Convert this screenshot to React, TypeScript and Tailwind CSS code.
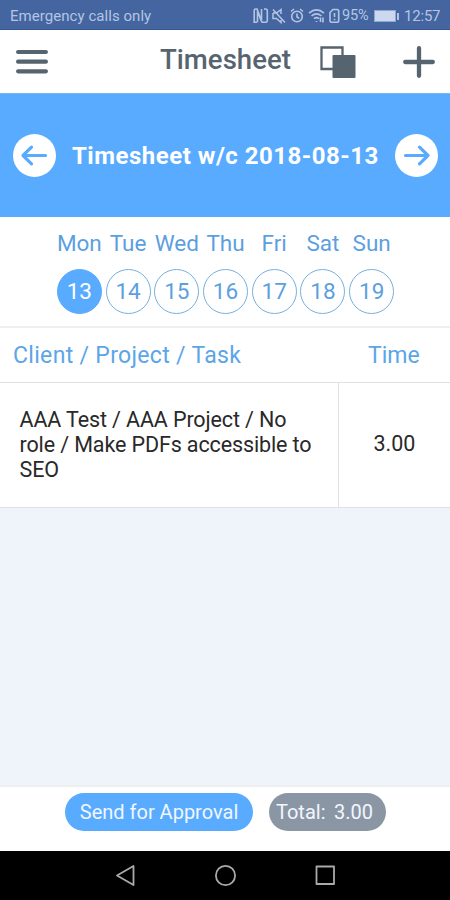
import type { ReactNode } from 'react';

const days = [
  { name: 'Mon', date: 13 },
  { name: 'Tue', date: 14 },
  { name: 'Wed', date: 15 },
  { name: 'Thu', date: 16 },
  { name: 'Fri', date: 17 },
  { name: 'Sat', date: 18 },
  { name: 'Sun', date: 19 },
];

function StatusBar() {
  return (
    <div className="flex h-[30px] shrink-0 items-center border-b border-[#35568f] bg-[#44659f] pt-[3px] pl-[10px] text-[15px] text-[#b3c5e4]">
      <span className="w-[243px] tracking-[0.05px]">Emergency calls only</span>
      <svg width="88" height="18" viewBox="253 7 88 18" fill="none" stroke="currentColor" strokeWidth="1.600" className="shrink-0">
        <path d="M257 22.300h-2.800V10.500q0-1.500 1.500-1.500h1.300l4.500 11.500V9M264 9h1.600q1.700 0 1.700 1.700v10q0 1.600-1.700 1.600h-2.400q-1.600 0-2-1.600L257.500 11v11.300" />
        <path d="M273 13h3.500l4.500-3.500v4.500M273 13v5.500h3.500l4.500 4V20M273 9.500l12 13" strokeWidth="1.500" />
        <circle cx="297" cy="16.500" r="5.300" />
        <path d="M297 13.500v3.500l2.200 1.300M291 11.500l3-2.500M303 11.500l-3-2.500" />
        <path d="M309 13.200q7.500-6.500 15 0M311.500 16q5-4.300 10 0M314 18.700q2.500-2.200 5 0M316.500 21v1M320.500 17.500v4.500M323 22.500v-5" />
        <path d="M330 12.500l3-3h4q1.700 0 1.700 1.700v9.300q0 1.700-1.700 1.700h-5.300q-1.700 0-1.700-1.700zM334.500 13v4M334.500 18.700v1.500" />
      </svg>
      <span className="ml-[1px] w-[30px] text-[14.500px] tracking-[-0.1px]">95%</span>
      <span className="ml-[2px] h-[12px] w-[22px] border border-[#91a8d0] bg-[#cbd8ef]" />
      <span className="ml-[1px] h-[7px] w-[2px] bg-[#b3c5e4]" />
      <span className="ml-[5px] tracking-[-0.2px]">12:57</span>
    </div>
  );
}

function RoundButton({ label, children }: { label: string; children: ReactNode }) {
  return (
    <button aria-label={label} className="flex size-[43px] shrink-0 items-center justify-center rounded-full bg-white text-[#58abff]">
      <svg width="43" height="43" viewBox="0 0 43 43" fill="none" stroke="currentColor" strokeWidth="3.200" strokeLinecap="round" strokeLinejoin="round">
        {children}
      </svg>
    </button>
  );
}

export default function App() {
  return (
    <div className="flex h-[900px] w-[450px] flex-col overflow-hidden bg-white font-[Roboto,sans-serif] whitespace-nowrap">
      <StatusBar />

      <header className="flex h-[63px] shrink-0 items-center pl-[16px] text-[#56646f]">
        <svg width="32" height="26" viewBox="0 0 32 26" stroke="currentColor" strokeWidth="4.200" strokeLinecap="round">
          <path d="M2.100 3h27.800M2.100 12.700h27.800M2.100 22.300h27.800" />
        </svg>
        <h1 className="ml-[112px] w-[160px] pb-[3px] text-[27.500px] font-medium tracking-[0.05px]">Timesheet</h1>
        <svg width="36" height="32" viewBox="320 46 36 32">
          <path d="M321.500 47.500h21v21.500h-21z" fill="#fff" stroke="currentColor" strokeWidth="2.300" />
          <rect x="332.500" y="55" width="23" height="23" rx="1" fill="currentColor" />
        </svg>
        <svg width="32" height="32" viewBox="0 0 32 32" stroke="currentColor" strokeWidth="4.300" strokeLinecap="round" className="ml-[47px]">
          <path d="M16 2.200v27.600M2.200 16h27.600" />
        </svg>
      </header>

      <section className="flex h-[124px] shrink-0 items-center border-t border-[#75b7f8] bg-[#58abff] px-[13px]">
        <RoundButton label="Previous week">
          <path d="M32.500 21.500H10M18.500 13.200L10 21.500L18.500 29.800" />
        </RoundButton>
        <h2 className="ml-[16px] w-[323px] shrink-0 text-[24px] font-bold tracking-[0.5px] text-white">Timesheet w/c 2018-08-13</h2>
        <RoundButton label="Next week">
          <path d="M10.500 21.500H33M24.500 13.200L33 21.500L24.500 29.800" />
        </RoundButton>
      </section>

      <section className="h-[111px] shrink-0 border-b-2 border-[#eeeff1] pt-[9px] pl-[55px] text-[22.500px] text-[#5c9fdf]">
        <div className="grid w-[341px] grid-cols-7">
          {days.map(({ name, date }) => (
            <div key={date} className="flex flex-col items-center">
              <span className="leading-[34px]">{name}</span>
              <span
                className={
                  'mt-[9px] flex size-[45px] items-center justify-center rounded-full border-[1.500px] ' +
                  (date === 13 ? 'border-[#58abff] bg-[#58abff] text-white' : 'border-[#76b0dc]')
                }
              >
                {date}
              </span>
            </div>
          ))}
        </div>
      </section>

      <div className="flex h-[55px] shrink-0 items-center border-b border-[#dfe1e4] pt-[2px] pl-[13px] text-[23px] text-[#5ba5e8]">
        <span className="w-[355px] tracking-[0.32px]">Client / Project / Task</span>
        <span>Time</span>
      </div>

      <div className="flex h-[125px] shrink-0 border-b border-[#dfe1e4] text-[21.500px] text-[#292929]">
        <p className="w-[339px] border-r-[1.500px] border-[#dfe1e4] pt-[24px] pl-[19.500px] leading-[25px] tracking-[-0.12px]">
          AAA Test / AAA Project / No
          <br />
          role / Make PDFs accessible to
          <br />
          SEO
        </p>
        <span className="flex flex-1 items-center justify-center pb-[2px]">3.00</span>
      </div>

      <main className="flex-1 bg-[#eff3fa]" />

      <footer className="flex h-[66px] shrink-0 border-t-2 border-[#eeeff1] pt-[6px] pl-[65px] text-[20px] text-[#f1f6ff]">
        <button className="h-[38px] w-[188px] rounded-full bg-[#58abff]">Send for Approval</button>
        <div className="ml-[16px] flex h-[38px] w-[117px] items-center rounded-full bg-[#8b96a5] pl-[7px]">
          <span className="w-[58px]">Total:</span>
          <span>3.00</span>
        </div>
      </footer>

      <nav className="h-[49px] shrink-0 bg-black">
        <svg width="450" height="49" viewBox="0 851 450 49" fill="none" stroke="#aaa" strokeWidth="1.800" strokeLinejoin="round">
          <path d="M133.500 866v19L117 875.500z" />
          <circle cx="225.500" cy="875.500" r="9.600" />
          <rect x="316.500" y="866.500" width="17.500" height="17.500" />
        </svg>
      </nav>
    </div>
  );
}
